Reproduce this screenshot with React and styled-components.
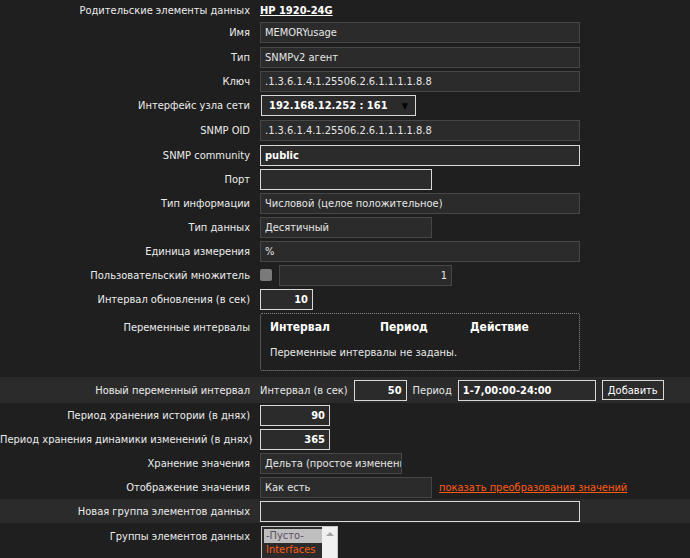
import React from "react";
import styled, { createGlobalStyle } from "styled-components";

const Global = createGlobalStyle`
  html, body { margin: 0; padding: 0; background: #1f1f1f; }
  body { font-family: "DejaVu Sans Condensed", "DejaVu Sans", sans-serif; font-stretch: condensed; font-size: 11px; color: #e6e6e6; }
`;

const Form = styled.div`
  display: flex;
  flex-direction: column;
  width: 690px;
  height: 558px;
  overflow: hidden;
  background: #1f1f1f;
`;

const Row = styled.div`
  box-sizing: border-box;
  display: grid;
  grid-template-columns: 250px 1fr;
  column-gap: 10px;
  align-items: ${(p) => (p.$top ? "start" : "center")};
  height: ${(p) => (p.$h ? `${p.$h}px` : "auto")};
  padding: ${(p) => p.$pad || "0"};
  background: ${(p) => (p.$hl ? "#2b2b2b" : "transparent")};
  flex-shrink: 0;
`;

const Label = styled.div`
  text-align: right;
  white-space: nowrap;
  color: #ececec;
  line-height: 13px;
  padding-top: ${(p) => p.$pt || 0}px;
`;

const Field = styled.div`
  display: flex;
  align-items: ${(p) => (p.$top ? "flex-start" : "center")};
  gap: ${(p) => p.$gap || 0}px;
  min-width: 0;
`;

const Input = styled.div`
  box-sizing: border-box;
  width: ${(p) => p.$w}px;
  height: 21px;
  padding: 0 4px;
  display: flex;
  align-items: center;
  justify-content: ${(p) => (p.$right ? "flex-end" : "flex-start")};
  background: #2b2b2b;
  border: 1px solid ${(p) => (p.$active ? "#d8d8d8" : "#474747")};
  color: ${(p) => (p.$active ? "#ffffff" : "#e6e6e6")};
  white-space: nowrap;
  overflow: hidden;
  flex-shrink: 0;
  font-weight: ${(p) => (p.$bold ? "bold" : "normal")};
`;

const Select = styled(Input)`
  justify-content: space-between;
  padding: 0 7px 0 7px;
  font-weight: bold;
  margin-left: 1px;
`;

const Arrow = styled.span`
  font-size: 9px;
  color: #050505;
`;

const HostLink = styled.a`
  color: #ffffff;
  font-weight: bold;
  text-decoration: underline;
  line-height: 13px;
`;

const Checkbox = styled.span`
  width: 12px;
  height: 12px;
  border-radius: 2px;
  background: #7a7a7a;
  flex-shrink: 0;
`;

const IntervalBox = styled.div`
  box-sizing: border-box;
  width: 320px;
  height: 58px;
  border: 1px dotted #8a8a8a;
  border-radius: 2px;
  padding: 6px 9px;
  display: flex;
  flex-direction: column;
  gap: 12px;
`;

const IntervalHead = styled.div`
  display: grid;
  grid-template-columns: 110px 90px 1fr;
  font-weight: bold;
  font-size: 12px;
  color: #ffffff;
`;

const Plain = styled.span`
  color: #e8e8e8;
  white-space: nowrap;
`;

const Button = styled.button`
  box-sizing: border-box;
  height: 20px;
  width: 62px;
  padding: 0;
  background: #2b2b2b;
  border: 1px solid #d8d8d8;
  color: #ffffff;
  font-family: inherit;
  font-stretch: condensed;
  font-size: 11px;
  flex-shrink: 0;
`;

const OrangeLink = styled.a`
  color: #ff5a14;
  text-decoration: underline;
  white-space: nowrap;
  margin-left: 7px;
`;

const ListBox = styled.div`
  box-sizing: border-box;
  width: 77px;
  height: 40px;
  margin-top: 3px;
  margin-left: 1px;
  border: 1px solid #c8c8c8;
  border-bottom: none;
  background: #2b2b2b;
  display: flex;
  flex-shrink: 0;
`;

const Options = styled.div`
  flex: 1;
  padding: 2px 0 0 2px;
  display: flex;
  flex-direction: column;
`;

const Option = styled.div`
  line-height: 14px;
  padding: 0 2px;
  background: ${(p) => (p.$sel ? "#bfbfbf" : "transparent")};
  color: ${(p) => (p.$sel ? "#5a4f63" : "#ff5a14")};
  white-space: nowrap;
`;

const ScrollBar = styled.div`
  width: 15px;
  background: #f0f0f0;
  display: flex;
  justify-content: center;
  padding-top: 5px;
`;

const UpArrow = styled.span`
  width: 0;
  height: 0;
  border-left: 4px solid transparent;
  border-right: 4px solid transparent;
  border-bottom: 4px solid #a3a3a3;
`;

export default function App() {
  return (
    <>
      <Global />
      <Form>
        <Row $h={20}>
          <Label>Родительские элементы данных</Label>
          <Field><HostLink>HP 1920-24G</HostLink></Field>
        </Row>
        <Row $h={25}>
          <Label>Имя</Label>
          <Field><Input $w={320}>MEMORYusage</Input></Field>
        </Row>
        <Row $h={24}>
          <Label>Тип</Label>
          <Field><Input $w={320}>SNMPv2 агент</Input></Field>
        </Row>
        <Row $h={24}>
          <Label>Ключ</Label>
          <Field><Input $w={320}>.1.3.6.1.4.1.25506.2.6.1.1.1.1.8.8</Input></Field>
        </Row>
        <Row $h={25}>
          <Label>Интерфейс узла сети</Label>
          <Field>
            <Select $w={155} $active>
              <span>192.168.12.252 : 161</span>
              <Arrow>▼</Arrow>
            </Select>
          </Field>
        </Row>
        <Row $h={25}>
          <Label>SNMP OID</Label>
          <Field><Input $w={320}>.1.3.6.1.4.1.25506.2.6.1.1.1.1.8.8</Input></Field>
        </Row>
        <Row $h={24}>
          <Label>SNMP community</Label>
          <Field><Input $w={320} $active $bold>public</Input></Field>
        </Row>
        <Row $h={24}>
          <Label>Порт</Label>
          <Field><Input $w={172} $active></Input></Field>
        </Row>
        <Row $h={24}>
          <Label>Тип информации</Label>
          <Field><Input $w={320}>Числовой (целое положительное)</Input></Field>
        </Row>
        <Row $h={24}>
          <Label>Тип данных</Label>
          <Field><Input $w={172}>Десятичный</Input></Field>
        </Row>
        <Row $h={24}>
          <Label>Единица измерения</Label>
          <Field><Input $w={320}>%</Input></Field>
        </Row>
        <Row $h={24}>
          <Label>Пользовательский множитель</Label>
          <Field $gap={7}>
            <Checkbox />
            <Input $w={173} $right>1</Input>
          </Field>
        </Row>
        <Row $h={24}>
          <Label>Интервал обновления (в сек)</Label>
          <Field><Input $w={53} $right $active $bold>10</Input></Field>
        </Row>
        <Row $h={66} $top $pad="2px 0 6px">
          <Label $pt={8}>Переменные интервалы</Label>
          <Field $top>
            <IntervalBox>
              <IntervalHead>
                <span>Интервал</span>
                <span>Период</span>
                <span>Действие</span>
              </IntervalHead>
              <Plain>Переменные интервалы не заданы.</Plain>
            </IntervalBox>
          </Field>
        </Row>
        <Row $h={26} $hl>
          <Label>Новый переменный интервал</Label>
          <Field $gap={6}>
            <Plain>Интервал (в сек)</Plain>
            <Input $w={53} $right $active $bold>50</Input>
            <Plain>Период</Plain>
            <Input $w={138} $active $bold>1-7,00:00-24:00</Input>
            <Button>Добавить</Button>
          </Field>
        </Row>
        <Row $h={24}>
          <Label>Период хранения истории (в днях)</Label>
          <Field><Input $w={70} $right $active $bold>90</Input></Field>
        </Row>
        <Row $h={24}>
          <Label>Период хранения динамики изменений (в днях)</Label>
          <Field><Input $w={70} $right $active $bold>365</Input></Field>
        </Row>
        <Row $h={24}>
          <Label>Хранение значения</Label>
          <Field><Input $w={142}>Дельта (простое изменение)</Input></Field>
        </Row>
        <Row $h={24}>
          <Label>Отображение значения</Label>
          <Field>
            <Input $w={172}>Как есть</Input>
            <OrangeLink>показать преобразования значений</OrangeLink>
          </Field>
        </Row>
        <Row $h={24} $hl>
          <Label>Новая группа элементов данных</Label>
          <Field><Input $w={320} $active></Input></Field>
        </Row>
        <Row $top $h={40}>
          <Label $pt={7}>Группы элементов данных</Label>
          <Field $top>
            <ListBox>
              <Options>
                <Option $sel>-Пусто-</Option>
                <Option>Interfaces</Option>
              </Options>
              <ScrollBar><UpArrow /></ScrollBar>
            </ListBox>
          </Field>
        </Row>
      </Form>
    </>
  );
}
